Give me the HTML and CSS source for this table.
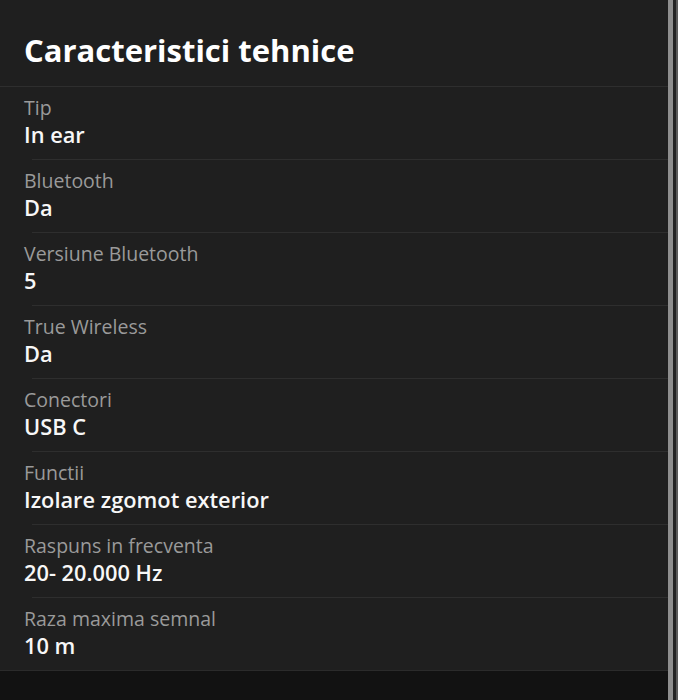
FILE: index.html
```html
<!DOCTYPE html>
<html lang="ro">
<head>
<meta charset="utf-8">
<title>Caracteristici tehnice</title>
<link rel="stylesheet" href="styles.css">
</head>
<body>
<div class="page">
  <main class="main">
    <section class="card">
      <h1 class="title">Caracteristici tehnice</h1>
      <div class="row"><div class="label">Tip</div><div class="value">In ear</div></div>
      <div class="row"><div class="label">Bluetooth</div><div class="value">Da</div></div>
      <div class="row"><div class="label">Versiune Bluetooth</div><div class="value">5</div></div>
      <div class="row"><div class="label">True Wireless</div><div class="value">Da</div></div>
      <div class="row"><div class="label">Conectori</div><div class="value">USB C</div></div>
      <div class="row"><div class="label">Functii</div><div class="value">Izolare zgomot exterior</div></div>
      <div class="row"><div class="label">Raspuns in frecventa</div><div class="value">20- 20.000 Hz</div></div>
      <div class="row"><div class="label">Raza maxima semnal</div><div class="value">10 m</div></div>
    </section>
  </main>
  <div class="scrollbar"><div class="thumb"></div><div class="gap"></div><div class="edge"></div></div>
</div>
</body>
</html>
```
FILE: styles.css
```css
html, body {
  margin: 0;
  padding: 0;
  background: #121212;
}
body {
  font-family: "Open Sans", "Noto Sans", sans-serif;
  width: 678px;
  height: 700px;
  overflow: hidden;
}
.page {
  display: flex;
  height: 700px;
}
.main {
  flex: 0 0 668px;
  background: #121212;
}
.card {
  background: #1f1f1f;
  border-bottom: 1px solid #2b2b2b;
}
.title {
  margin: 0;
  padding: 30px 24px 16px;
  font-size: 31px;
  line-height: 40px;
  font-weight: 700;
  color: #ffffff;
  border-bottom: 1px solid #2e2e2e;
}
.row {
  padding: 9px 0 0 24px;
}
.row::after {
  content: "";
  display: block;
  height: 1px;
  margin: 10px 0 0 8px;
  background: #2e2e2e;
}
.row:last-child::after {
  height: 0;
}
.label {
  font-size: 19.5px;
  line-height: 24px;
  color: #9a9a9a;
}
.value {
  margin-top: 1px;
  font-size: 21.8px;
  line-height: 28px;
  font-weight: 600;
  color: #f7f7f7;
}
.scrollbar {
  flex: 0 0 10px;
  display: flex;
  background: #1c1c1c;
}
.thumb {
  width: 5px;
  background: #8e8e8e;
}
.gap {
  width: 3px;
  background: #242424;
}
.edge {
  width: 2px;
  background: #5a5a5a;
}
```
